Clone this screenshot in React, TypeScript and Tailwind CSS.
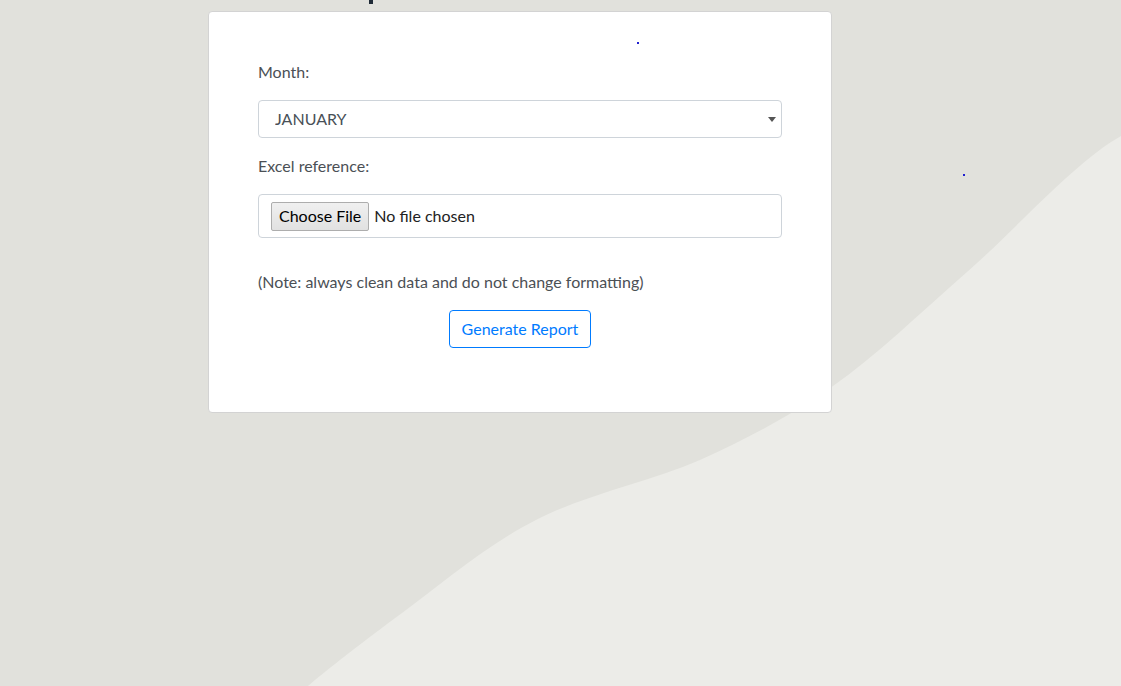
export default function App() {
  return (
    <div className="relative min-h-screen overflow-hidden bg-[#e1e1dc] font-['Lato',sans-serif] text-[16px] text-[#4b5055]">
      {/* background wave */}
      <svg className="absolute inset-0 h-full w-full" viewBox="0 0 1121 686" preserveAspectRatio="none">
        <path
          d="M1121 136 C1076 161 1015 230 967 272 C919 314 877 355 833 386 C788 417 749 438 700 460 C650 482 586 494 536 520 C486 545 440 585 402 613 C364 641 324 672 308 686 L1121 686 Z"
          fill="#ecece8"
        />
      </svg>

      <div className="relative">
        <div className="ml-[369px] h-[4px] w-[4px] bg-[#1f2a36]" />
        <div className="ml-[208px] mt-[7px] w-[624px] rounded border border-[#d3d3d3] bg-white px-[49px] pb-16 pt-12">
          <label className="block leading-6">Month:</label>
          <div className="relative mt-4">
            <select className="h-[38px] w-full appearance-none rounded border border-[#ced4da] bg-white pl-4 text-[16px] text-[#495057] outline-none">
              <option>JANUARY</option>
            </select>
            <svg className="pointer-events-none absolute right-[6px] top-[17px] h-[5px] w-[8px]" viewBox="0 0 8 5">
              <path d="M0 0 H8 L4 5 Z" fill="#555" />
            </svg>
          </div>

          <label className="mt-4 block leading-6">Excel reference:</label>
          <div className="mt-4 flex h-[44px] items-center rounded border border-[#ced4da] pl-3">
            <button className="h-[29px] rounded-[2px] border border-[#adadad] bg-gradient-to-b from-[#f0f0f0] to-[#e1e1e1] px-[7px] text-[16px] leading-none text-black">
              Choose File
            </button>
            <span className="ml-[5px] text-[#222]">No file chosen</span>
          </div>

          <p className="mt-8 leading-6">(Note: always clean data and do not change formatting)</p>

          <div className="mt-4 flex justify-center">
            <button className="h-[38px] rounded border border-[#007bff] px-3 text-[16px] text-[#007bff]">
              Generate Report
            </button>
          </div>
        </div>
      </div>

      {/* stray dots */}
      <div className="absolute left-[637px] top-[42px] h-[2px] w-[2px] bg-[#2020d0]" />
      <div className="absolute left-[963px] top-[174px] h-[2px] w-[2px] bg-[#2020d0]" />
    </div>
  );
}
